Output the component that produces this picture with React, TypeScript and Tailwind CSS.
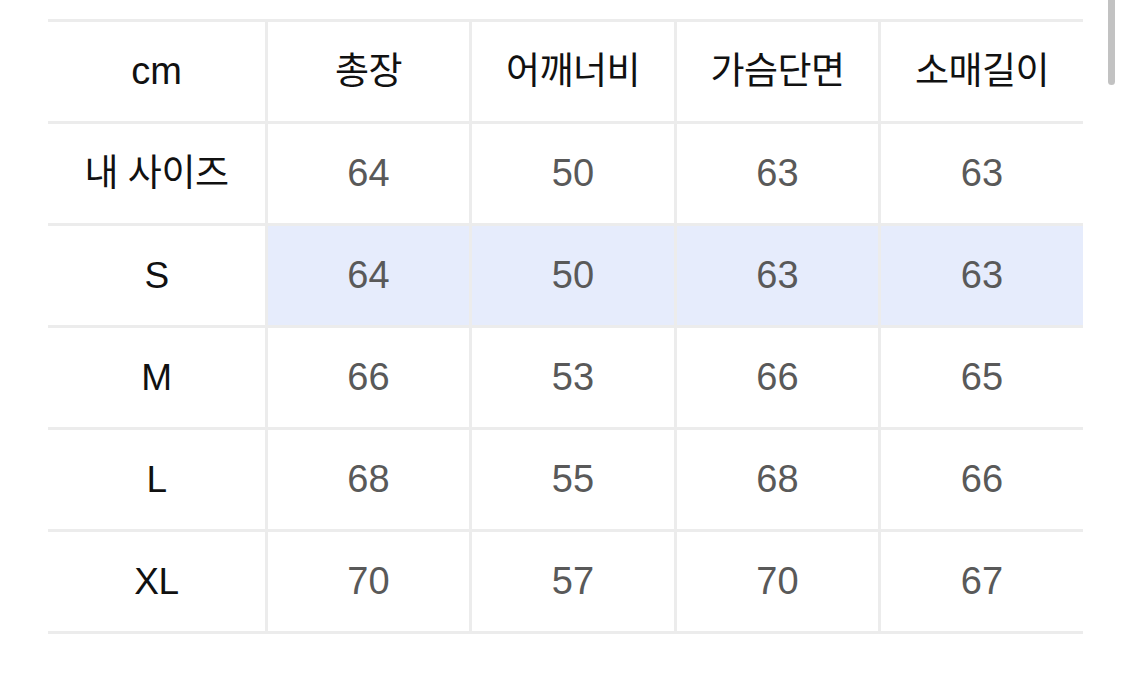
import React from "react";

const headers = ["총장", "어깨너비", "가슴단면", "소매길이"];
const rows: { label: string; vals: string[]; hl?: boolean }[] = [
  { label: "내 사이즈", vals: ["64", "50", "63", "63"] },
  { label: "S", vals: ["64", "50", "63", "63"], hl: true },
  { label: "M", vals: ["66", "53", "66", "65"] },
  { label: "L", vals: ["68", "55", "68", "66"] },
  { label: "XL", vals: ["70", "57", "70", "67"] },
];

const widths = ["w-[204px]", "w-[205px]", "w-[204px]", "w-[205px]"];

export default function App() {
  return (
    <div
      className="relative w-[1125px] h-[679px] bg-white overflow-hidden"
      style={{ fontFamily: '"Liberation Sans", "Noto Sans CJK KR", sans-serif' }}
    >
      <div className="ml-[48px] mt-[19px] w-[1035px] border-b-[3px] border-[#ececec]">
        <div className="flex h-[102px] border-t-[3px] border-[#ececec]">
          <div className="w-[217px] flex items-center justify-center text-[38px] text-[#111]">cm</div>
          {headers.map((h, i) => (
            <div
              key={h}
              className={`${widths[i]} border-l-[3px] border-[#ececec] flex items-center justify-center text-[37px] tracking-[-0.5px] text-[#111]`}
            >
              {h}
            </div>
          ))}
        </div>
        {rows.map((r) => (
          <div key={r.label} className="flex h-[102px] border-t-[3px] border-[#ececec]">
            <div className="w-[217px] flex items-center justify-center text-[37px] tracking-[-0.5px] text-[#111]">
              {r.label}
            </div>
            {r.vals.map((v, i) => (
              <div
                key={i}
                className={`${widths[i]} border-l-[3px] border-[#ececec] flex items-center justify-center text-[38px] text-[#595959] ${
                  r.hl ? "bg-[#e6ecfc]" : ""
                }`}
              >
                {v}
              </div>
            ))}
          </div>
        ))}
      </div>
      <div className="absolute left-[1108px] top-0 w-[7px] h-[85px] rounded-b-full bg-[#c2c2c2]" />
    </div>
  );
}
